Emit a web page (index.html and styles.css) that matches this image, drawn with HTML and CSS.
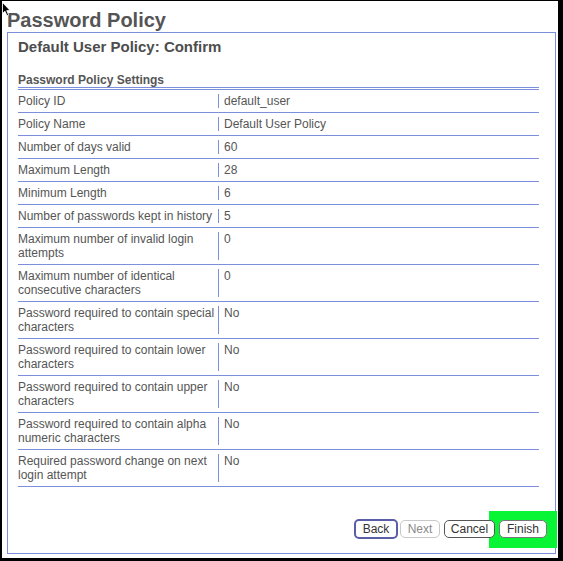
FILE: index.html
```html
<!DOCTYPE html>
<html>
<head>
<meta charset="utf-8">
<title>Password Policy</title>
<link rel="stylesheet" href="styles.css">
</head>
<body>
<div class="page">
  <svg class="cursor" width="9" height="15" viewBox="0 0 9 15"><path d="M0.5 0.5 L0.5 11.5 L3 9.2 L5 13.8 L6.6 13 L4.7 8.6 L8 8.4 Z" fill="#000" stroke="#fff" stroke-width="0.8"/></svg>
  <h1 class="title">Password Policy</h1>
  <div class="box">
    <h2 class="subtitle">Default User Policy: Confirm</h2>
    <h3 class="section">Password Policy Settings</h3>
    <div class="settings">
      <div class="row"><div class="label">Policy ID</div><div class="value">default_user</div></div>
      <div class="row"><div class="label">Policy Name</div><div class="value">Default User Policy</div></div>
      <div class="row"><div class="label">Number of days valid</div><div class="value">60</div></div>
      <div class="row"><div class="label">Maximum Length</div><div class="value">28</div></div>
      <div class="row"><div class="label">Minimum Length</div><div class="value">6</div></div>
      <div class="row"><div class="label">Number of passwords kept in history</div><div class="value">5</div></div>
      <div class="row"><div class="label">Maximum number of invalid login attempts</div><div class="value">0</div></div>
      <div class="row"><div class="label">Maximum number of identical consecutive characters</div><div class="value">0</div></div>
      <div class="row"><div class="label">Password required to contain special characters</div><div class="value">No</div></div>
      <div class="row"><div class="label">Password required to contain lower characters</div><div class="value">No</div></div>
      <div class="row"><div class="label">Password required to contain upper characters</div><div class="value">No</div></div>
      <div class="row"><div class="label">Password required to contain alpha numeric characters</div><div class="value">No</div></div>
      <div class="row"><div class="label">Required password change on next login attempt</div><div class="value">No</div></div>
    </div>
    <div class="actions">
      <button class="btn btn-focus">Back</button>
      <button class="btn btn-disabled">Next</button>
      <button class="btn btn-cancel">Cancel</button>
      <button class="btn btn-finish">Finish</button>
    </div>
    <div class="highlight"></div>
  </div>
</div>
</body>
</html>
```
FILE: styles.css
```css
html, body {
  margin: 0;
  padding: 0;
  background: #000;
}
body {
  width: 563px;
  height: 561px;
  overflow: hidden;
  font-family: "Liberation Sans", Arial, sans-serif;
}
.page {
  position: relative;
  margin: 1px 5px 3px 2px;
  width: 549px;
  height: 557px;
  padding: 0 2px 0 5px;
  background: #fff;
}
.cursor {
  position: absolute;
  left: 0;
  top: 1px;
  z-index: 5;
}
.title {
  margin: 0;
  padding-top: 7px;
  font-size: 20px;
  line-height: 24px;
  font-weight: bold;
  color: #555;
}
.box {
  position: relative;
  box-sizing: border-box;
  height: 522px;
  border: 1px solid #7b8fdd;
  padding: 5px 8px 14px 10px;
  display: flex;
  flex-direction: column;
}
.subtitle {
  margin: 0;
  font-size: 15px;
  line-height: 18px;
  font-weight: bold;
  color: #4d4d4d;
}
.section {
  margin: 17px 8px 0 0;
  font-size: 12px;
  line-height: 14px;
  font-weight: bold;
  color: #555;
  border-bottom: 3px double #7b8fdd;
}
.settings {
  margin-right: 8px;
}
.row {
  display: grid;
  grid-template-columns: 200px 1fr;
  border-bottom: 1px solid #7b8fdd;
  font-size: 12px;
  line-height: 14px;
  color: #555;
}
.label {
  padding: 4px 0;
}
.value {
  margin: 4px 0 4px;
  border-left: 1px solid #7b8fdd;
  padding-left: 5px;
}
.actions {
  margin-top: auto;
  display: flex;
  justify-content: flex-end;
  align-items: flex-start;
  gap: 4px;
}
.btn {
  position: relative;
  z-index: 2;
  box-sizing: border-box;
  height: 18px;
  padding: 0;
  text-align: center;
  font-family: "Liberation Sans", Arial, sans-serif;
  font-size: 12px;
  line-height: 16px;
  background: #fff;
  border: 1px solid #777;
  border-radius: 5px;
  color: #333;
}
.btn-focus {
  width: 44px;
  height: 20px;
  margin-top: -1px;
  margin-right: -2px;
  line-height: 16px;
  border: 2px solid #5a5ea8;
  color: #333;
}
.btn-disabled {
  width: 40px;
  border-color: #c8c8c8;
  color: #8a8a8a;
}
.btn-cancel {
  width: 51px;
  border-color: #555;
}
.btn-finish {
  width: 48px;
  border-color: #777;
}
.highlight {
  position: absolute;
  left: 481px;
  top: 478px;
  width: 68px;
  height: 37px;
  background: #08f535;
  z-index: 1;
}
```
